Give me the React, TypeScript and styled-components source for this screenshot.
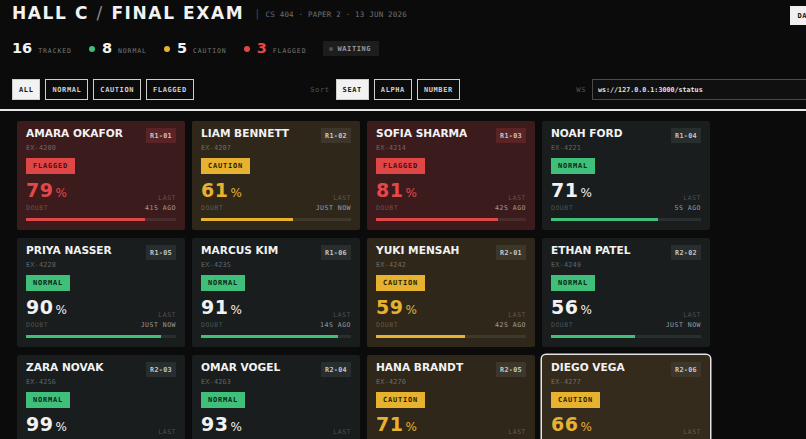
import styled, { createGlobalStyle } from 'styled-components';

type Status = 'normal' | 'caution' | 'flagged';

type Candidate = {
  name: string;
  exam: string;
  seat: string;
  status: Status;
  doubt: number;
  last: string;
};

const TONES: Record<Status, { card: string; seat: string; accent: string; ink: string; value: string }> = {
  normal: { card: '#191d1d', seat: '#282d2d', accent: '#3fbf7a', ink: '#0b2616', value: '#f2f2f2' },
  caution: { card: '#2f281a', seat: '#3d362a', accent: '#e6b22f', ink: '#2a1e02', value: '#e6b22f' },
  flagged: { card: '#3c1b1d', seat: '#5a2326', accent: '#e04646', ink: '#4a0c0e', value: '#e54848' },
};

const candidates: Candidate[] = [
  { name: 'AMARA OKAFOR', exam: 'EX-4200', seat: 'R1-01', status: 'flagged', doubt: 79, last: '41S AGO' },
  { name: 'LIAM BENNETT', exam: 'EX-4207', seat: 'R1-02', status: 'caution', doubt: 61, last: 'JUST NOW' },
  { name: 'SOFIA SHARMA', exam: 'EX-4214', seat: 'R1-03', status: 'flagged', doubt: 81, last: '42S AGO' },
  { name: 'NOAH FORD', exam: 'EX-4221', seat: 'R1-04', status: 'normal', doubt: 71, last: '5S AGO' },
  { name: 'PRIYA NASSER', exam: 'EX-4228', seat: 'R1-05', status: 'normal', doubt: 90, last: 'JUST NOW' },
  { name: 'MARCUS KIM', exam: 'EX-4235', seat: 'R1-06', status: 'normal', doubt: 91, last: '14S AGO' },
  { name: 'YUKI MENSAH', exam: 'EX-4242', seat: 'R2-01', status: 'caution', doubt: 59, last: '42S AGO' },
  { name: 'ETHAN PATEL', exam: 'EX-4249', seat: 'R2-02', status: 'normal', doubt: 56, last: 'JUST NOW' },
  { name: 'ZARA NOVAK', exam: 'EX-4256', seat: 'R2-03', status: 'normal', doubt: 99, last: '8S AGO' },
  { name: 'OMAR VOGEL', exam: 'EX-4263', seat: 'R2-04', status: 'normal', doubt: 93, last: '3S AGO' },
  { name: 'HANA BRANDT', exam: 'EX-4270', seat: 'R2-05', status: 'caution', doubt: 71, last: '20S AGO' },
  { name: 'DIEGO VEGA', exam: 'EX-4277', seat: 'R2-06', status: 'caution', doubt: 66, last: 'JUST NOW' },
  { name: 'LENA FISCHER', exam: 'EX-4284', seat: 'R3-01', status: 'flagged', doubt: 84, last: '11S AGO' },
  { name: 'KOFI ASANTE', exam: 'EX-4291', seat: 'R3-02', status: 'normal', doubt: 88, last: 'JUST NOW' },
  { name: 'MEI TANAKA', exam: 'EX-4298', seat: 'R3-03', status: 'caution', doubt: 63, last: '9S AGO' },
  { name: 'RAFAEL COSTA', exam: 'EX-4305', seat: 'R3-04', status: 'normal', doubt: 95, last: '2S AGO' },
];

const DISPLAY = `"DejaVu Sans", "Liberation Sans", sans-serif`;
const MONO = `"DejaVu Sans Mono", "Liberation Mono", monospace`;

const GlobalStyle = createGlobalStyle`
  html, body {
    margin: 0;
    background: #0b0b0b;
    overflow: hidden;
  }
  * {
    box-sizing: border-box;
  }
`;

const Page = styled.div`
  width: 832px;
  min-height: 100vh;
  background: #0b0b0b;
  padding-top: 5px;
`;

const TopBar = styled.header`
  display: flex;
  justify-content: space-between;
  align-items: flex-start;
  padding: 0 12px;
`;

const TitleRow = styled.div`
  display: flex;
  align-items: center;
  gap: 10px;
`;

const Title = styled.h1`
  margin: 0;
  font-family: ${DISPLAY};
  font-size: 17px;
  line-height: 1;
  font-weight: 700;
  letter-spacing: 1.6px;
  color: #f2f2f2;
  > span {
    color: #8a8a8a;
    font-weight: 400;
  }
`;

const Meta = styled.div`
  font-family: ${MONO};
  font-size: 7.5px;
  line-height: 1;
  letter-spacing: 0.2px;
  color: #707070;
  > span {
    color: #4a4a4a;
    margin-right: 5px;
    font-size: 10px;
  }
`;

const ThemeButton = styled.button`
  margin-top: 1px;
  height: 19px;
  padding: 0 8px;
  border: none;
  background: #f0f0f0;
  color: #111;
  font-family: ${MONO};
  font-size: 7px;
  font-weight: 700;
  letter-spacing: 0.6px;
`;

const StatsRow = styled.div`
  display: flex;
  align-items: center;
  gap: 17px;
  padding: 0 12px;
  margin-top: 16px;
  height: 15px;
`;

const Stat = styled.div`
  display: flex;
  align-items: baseline;
  gap: 6px;
`;

const Dot = styled.span<{ $color: string }>`
  align-self: center;
  width: 6px;
  height: 6px;
  border-radius: 50%;
  background: ${(p) => p.$color};
  margin-right: 1px;
`;

const StatNum = styled.span<{ $color?: string }>`
  font-family: ${DISPLAY};
  font-size: 14.5px;
  line-height: 1;
  font-weight: 700;
  color: ${(p) => p.$color || '#f2f2f2'};
`;

const StatLabel = styled.span`
  font-family: ${MONO};
  font-size: 6.5px;
  letter-spacing: 0.9px;
  color: #7a7a7a;
`;

const WaitingTag = styled.div`
  display: flex;
  align-items: center;
  gap: 4px;
  height: 15px;
  padding: 0 8px 0 6px;
  background: #1d1d1d;
  font-family: ${MONO};
  font-size: 7px;
  font-weight: 700;
  letter-spacing: 0.6px;
  color: #9a9a9a;
  &::before {
    content: '';
    width: 4px;
    height: 4px;
    border-radius: 50%;
    background: #505050;
  }
`;

const Toolbar = styled.div`
  display: flex;
  justify-content: space-between;
  align-items: center;
  padding: 0 12px;
  margin-top: 23px;
`;

const Group = styled.div`
  display: flex;
  align-items: center;
  gap: 5px;
`;

const Chip = styled.button<{ $active?: boolean }>`
  height: 21px;
  padding: 0 6px;
  border: 1.5px solid #cfcfcf;
  background: ${(p) => (p.$active ? '#f2f2f2' : 'transparent')};
  color: ${(p) => (p.$active ? '#111' : '#d0d0d0')};
  font-family: ${MONO};
  font-size: 7px;
  font-weight: 700;
  letter-spacing: 0.6px;
`;

const FieldLabel = styled.span`
  font-family: ${MONO};
  font-size: 7px;
  letter-spacing: 0.6px;
  color: #555;
  margin-right: 1px;
`;

const Endpoint = styled.input`
  width: 228px;
  height: 21px;
  padding: 0 5px;
  border: 1.5px solid #4a4a4a;
  background: #101010;
  color: #e6e6e6;
  font-family: ${MONO};
  font-size: 6.7px;
  font-weight: 700;
  outline: none;
`;

const Divider = styled.hr`
  margin: 9px 0 0;
  border: none;
  height: 2px;
  background: #e6e6e6;
`;

const Grid = styled.main`
  display: grid;
  grid-template-columns: repeat(auto-fill, 168px);
  gap: 8px 7px;
  padding: 10px 17px;
`;

const Card = styled.article<{ $status: Status; $selected?: boolean }>`
  display: flex;
  flex-direction: column;
  height: 109px;
  padding: 7px 9px 8px;
  border-radius: ${(p) => (p.$selected ? '4px' : '2px')};
  background: ${(p) => (p.$selected ? '#352b1c' : TONES[p.$status].card)};
  box-shadow: ${(p) => (p.$selected ? '0 0 0 1.5px #e4e4e4' : 'none')};
`;

const CardHead = styled.div`
  display: flex;
  justify-content: space-between;
  align-items: flex-start;
`;

const Name = styled.div`
  font-family: ${DISPLAY};
  font-size: 10.6px;
  line-height: 1;
  font-weight: 700;
  color: #f2f2f2;
`;

const ExamId = styled.div`
  margin-top: 6px;
  font-family: ${MONO};
  font-size: 6.8px;
  line-height: 1;
  letter-spacing: 0.2px;
  color: rgba(255, 255, 255, 0.33);
`;

const Seat = styled.span<{ $status: Status }>`
  display: flex;
  align-items: center;
  height: 15px;
  padding: 0 4px;
  background: ${(p) => TONES[p.$status].seat};
  font-family: ${MONO};
  font-size: 6.8px;
  font-weight: 700;
  letter-spacing: 0.3px;
  color: rgba(255, 255, 255, 0.72);
`;

const StatusTag = styled.span<{ $status: Status }>`
  align-self: flex-start;
  display: flex;
  align-items: center;
  height: 16px;
  margin-top: 7px;
  padding: 0 7px;
  background: ${(p) => TONES[p.$status].accent};
  color: ${(p) => TONES[p.$status].ink};
  font-family: ${MONO};
  font-size: 7px;
  font-weight: 700;
  letter-spacing: 0.8px;
`;

const Readout = styled.div`
  display: flex;
  justify-content: space-between;
  align-items: flex-end;
  margin-top: 7px;
`;

const Value = styled.div<{ $status: Status }>`
  font-family: ${DISPLAY};
  font-size: 19px;
  line-height: 1;
  font-weight: 700;
  letter-spacing: 0.5px;
  color: ${(p) => TONES[p.$status].value};
  > small {
    margin-left: 2px;
    font-size: 12px;
    font-weight: 400;
    letter-spacing: 0;
  }
`;

const Tiny = styled.div<{ $bright?: boolean }>`
  font-family: ${MONO};
  font-size: 6.5px;
  line-height: 1;
  letter-spacing: 0.5px;
  color: ${(p) => (p.$bright ? 'rgba(255,255,255,0.55)' : 'rgba(255,255,255,0.24)')};
`;

const DoubtLabel = styled(Tiny)`
  margin-top: 5px;
`;

const LastCol = styled.div`
  display: flex;
  flex-direction: column;
  align-items: flex-end;
  gap: 4px;
`;

const Track = styled.div`
  margin-top: 6px;
  height: 3px;
  background: rgba(255, 255, 255, 0.08);
`;

const Fill = styled.div<{ $status: Status }>`
  height: 100%;
  background: ${(p) => TONES[p.$status].accent};
`;

const CandidateCard = ({ c, selected }: { c: Candidate; selected?: boolean }) => (
  <Card $status={c.status} $selected={selected}>
    <CardHead>
      <div>
        <Name>{c.name}</Name>
        <ExamId>{c.exam}</ExamId>
      </div>
      <Seat $status={c.status}>{c.seat}</Seat>
    </CardHead>
    <StatusTag $status={c.status}>{c.status.toUpperCase()}</StatusTag>
    <Readout>
      <div>
        <Value $status={c.status}>
          {c.doubt}
          <small>%</small>
        </Value>
        <DoubtLabel>DOUBT</DoubtLabel>
      </div>
      <LastCol>
        <Tiny>LAST</Tiny>
        <Tiny $bright>{c.last}</Tiny>
      </LastCol>
    </Readout>
    <Track>
      <Fill $status={c.status} style={{ width: `${c.doubt}%` }} />
    </Track>
  </Card>
);

const App = () => {
  return (
    <Page>
      <GlobalStyle />
      <TopBar>
        <TitleRow>
          <Title>
            HALL C <span>/</span> FINAL EXAM
          </Title>
          <Meta>
            <span>|</span>CS 404 · PAPER 2 · 13 JUN 2026
          </Meta>
        </TitleRow>
        <ThemeButton>DAY</ThemeButton>
      </TopBar>

      <StatsRow>
        <Stat>
          <StatNum>16</StatNum>
          <StatLabel>TRACKED</StatLabel>
        </Stat>
        <Stat>
          <Dot $color="#3fbf7a" />
          <StatNum>8</StatNum>
          <StatLabel>NORMAL</StatLabel>
        </Stat>
        <Stat>
          <Dot $color="#e6b22f" />
          <StatNum>5</StatNum>
          <StatLabel>CAUTION</StatLabel>
        </Stat>
        <Stat>
          <Dot $color="#e04646" />
          <StatNum $color="#e54848">3</StatNum>
          <StatLabel>FLAGGED</StatLabel>
        </Stat>
        <WaitingTag>WAITING</WaitingTag>
      </StatsRow>

      <Toolbar>
        <Group>
          <Chip $active>ALL</Chip>
          <Chip>NORMAL</Chip>
          <Chip>CAUTION</Chip>
          <Chip>FLAGGED</Chip>
        </Group>
        <Group>
          <FieldLabel>Sort</FieldLabel>
          <Chip $active>SEAT</Chip>
          <Chip>ALPHA</Chip>
          <Chip>NUMBER</Chip>
        </Group>
        <Group>
          <FieldLabel>WS</FieldLabel>
          <Endpoint readOnly value="ws://127.0.0.1:3000/status" />
        </Group>
      </Toolbar>

      <Divider />

      <Grid>
        {candidates.map((c) => (
          <CandidateCard key={c.seat} c={c} selected={c.seat === 'R2-06'} />
        ))}
      </Grid>
    </Page>
  );
};

export default App;
